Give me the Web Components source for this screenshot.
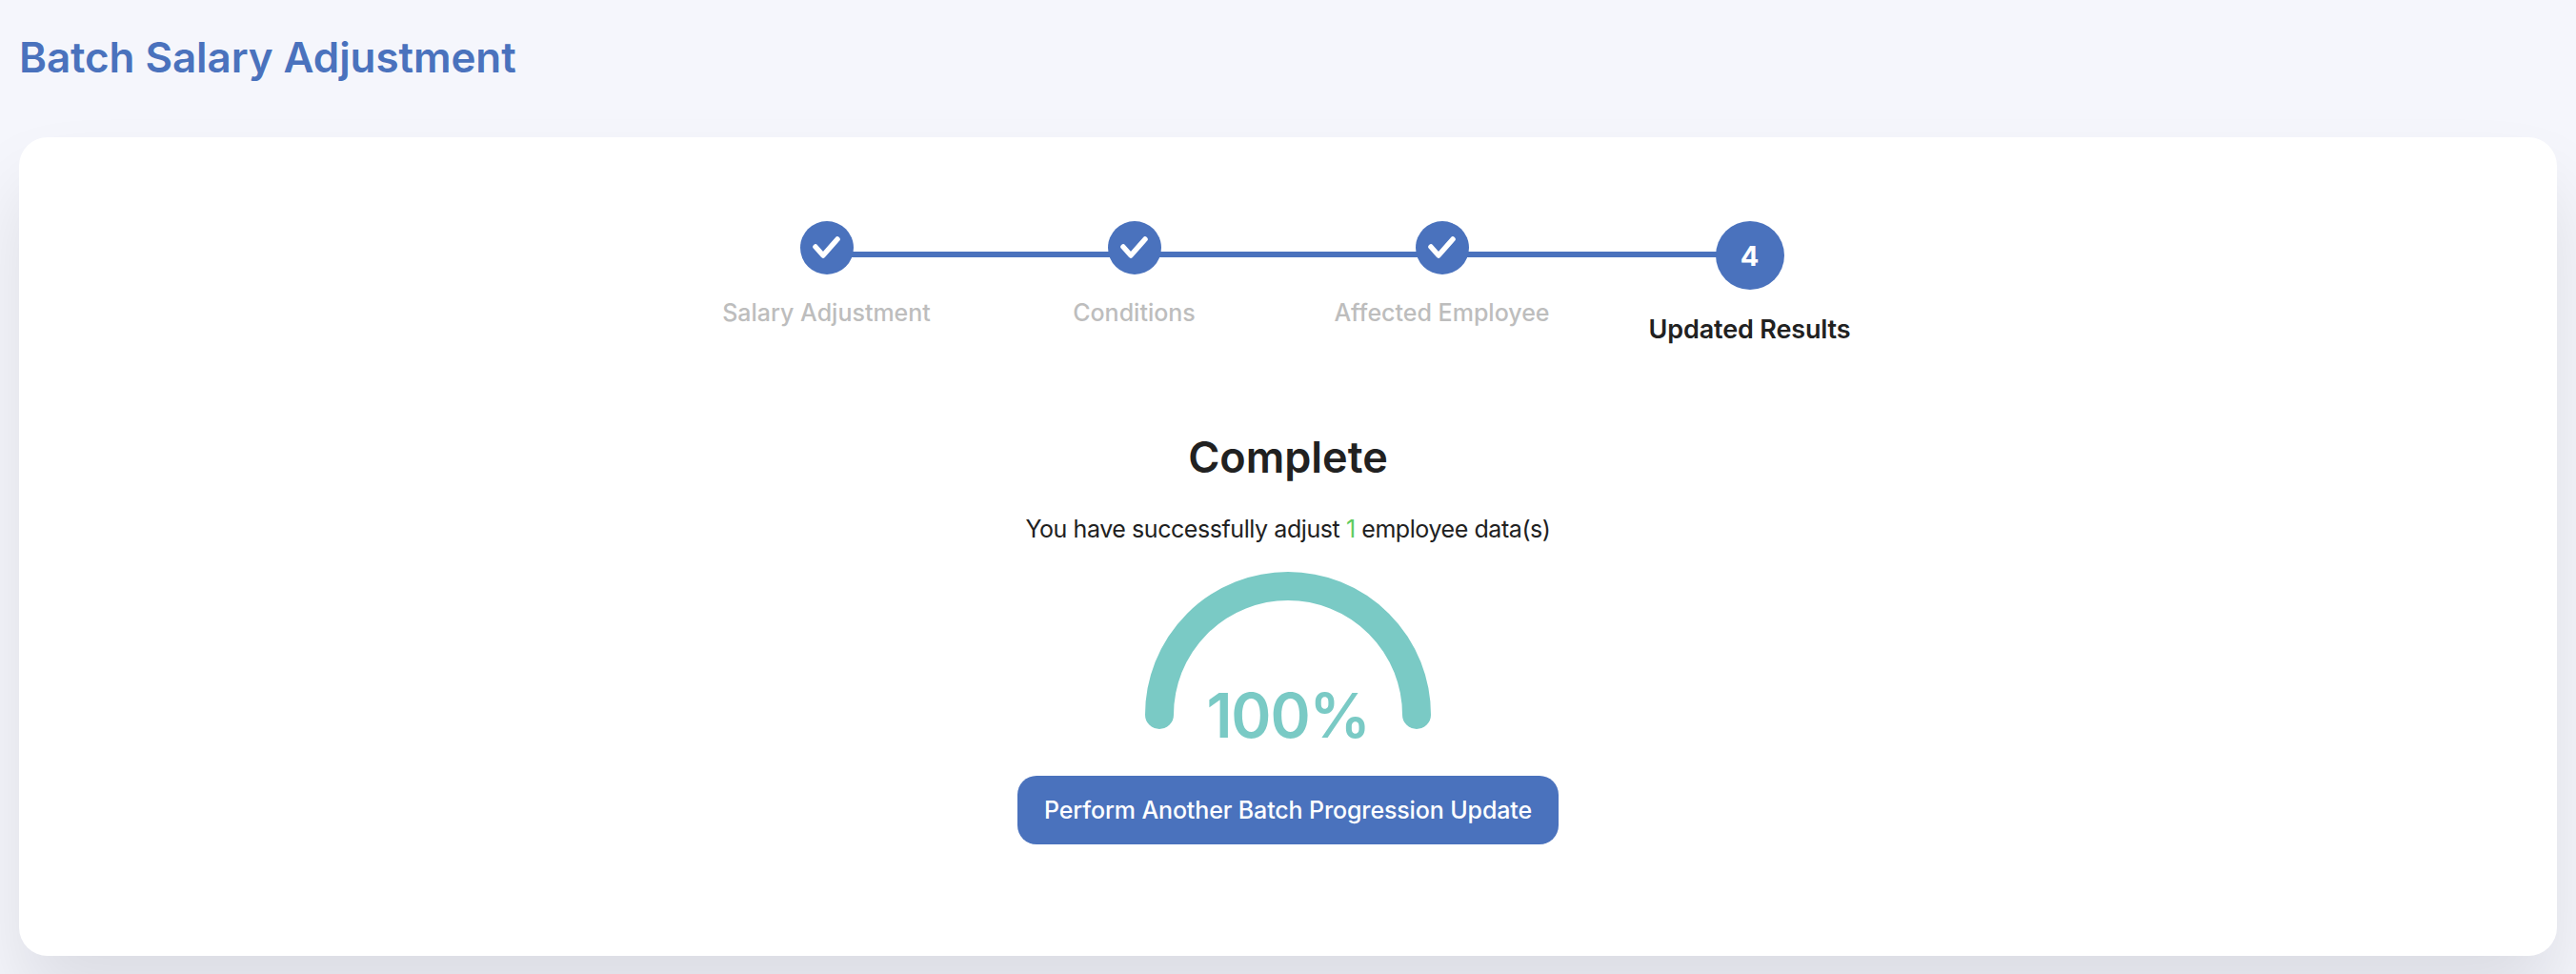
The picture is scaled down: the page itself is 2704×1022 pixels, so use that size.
<!DOCTYPE html>
<html><head><meta charset="utf-8"><style>
html,body{margin:0;padding:0;background:#f5f6fc;height:100%;overflow:hidden}
body{font-family:Inter,"Liberation Sans",sans-serif;color:#212121}
</style></head><body>
<template id="t-page"><style>
:host{display:flex;flex-direction:column;height:1022px;box-sizing:border-box;padding:0 20px 19px}
h1{margin:0;height:144px;box-sizing:border-box;padding-top:33px;font:600 44px/54px Inter,sans-serif;color:#4a72bd;letter-spacing:-.1px}
.card{flex:1;background:#fff;border-radius:30px;box-shadow:0 50px 80px rgba(0,0,20,.1);padding-top:88px;display:flex;flex-direction:column;align-items:center}
</style><h1>Batch Salary Adjustment</h1><div class="card"><slot></slot></div></template>

<template id="t-stepper"><style>
:host{display:grid;grid-template-columns:repeat(4,323px)}
</style><slot></slot></template>

<template id="t-step"><style>
:host{display:flex;flex-direction:column;align-items:center;position:relative;font:500 25px/30px Inter,sans-serif;color:#bdbdbd;letter-spacing:0}
:host([connect])::before{content:"";position:absolute;left:50%;width:100%;top:32px;height:6px;background:#4a72bd}
.dot{position:relative;width:56px;height:56px;border-radius:50%;background:#4a72bd;display:flex;align-items:center;justify-content:center;color:#fff}
:host([current]) .dot{width:72px;height:72px;font:700 29px/1 Inter,sans-serif;letter-spacing:0}
:host([current]){color:#212121;font-weight:600;font-size:27px;letter-spacing:-.15px}
.label{margin-top:25px;white-space:nowrap}
:host([current]) .label{margin-top:27px}
svg{display:block}
</style><div class="dot" id="dot"></div><div class="label"><slot></slot></div></template>

<template id="t-gauge"><style>
:host{display:block;position:relative;width:300px;height:174px}
svg{display:block}
.v{position:absolute;left:0;right:0;top:113px;text-align:center;font:600 64px/76px Inter,sans-serif;color:#7acac5;letter-spacing:-1.2px}
</style><svg width="300" height="165" viewBox="0 0 300 165"><path d="M15 150A135 135 0 0 1 285 150" fill="none" stroke="#7acac5" stroke-width="30" stroke-linecap="round"/></svg><div class="v"><slot></slot></div></template>

<template id="t-result"><style>
:host{display:flex;flex-direction:column;align-items:center;margin-top:92px}
h2{margin:0;font:600 45px/54px Inter,sans-serif;color:#212121;letter-spacing:0}
p{margin:33px 0 0;font:400 25px/30px Inter,sans-serif;color:#212121;letter-spacing:-.43px}
b{font-weight:400;color:#5ecb5e}
.g{margin-top:30px}
button{margin-top:40px;width:568px;height:72px;border:0;border-radius:20px;background:#4a72bd;color:#fff;font:500 25px/30px Inter,sans-serif;letter-spacing:-.13px;padding:0}
</style><h2>Complete</h2><p>You have successfully adjust <b>1</b> employee data(s)</p><div class="g"><gauge-meter>100%</gauge-meter></div><button>Perform Another Batch Progression Update</button></template>

<batch-page>
<salary-stepper>
<salary-step connect>Salary Adjustment</salary-step>
<salary-step connect>Conditions</salary-step>
<salary-step connect>Affected Employee</salary-step>
<salary-step current="4">Updated Results</salary-step>
</salary-stepper>
<result-panel></result-panel>
</batch-page>
<script>
function def(name,tid,after){customElements.define(name,class extends HTMLElement{constructor(){super();this.attachShadow({mode:'open'}).appendChild(document.getElementById(tid).content.cloneNode(true));}connectedCallback(){after&&after(this)}})}
def('salary-stepper','t-stepper');
def('salary-step','t-step',el=>{const d=el.shadowRoot.getElementById('dot');
 if(el.hasAttribute('current')){d.textContent=el.getAttribute('current')}
 else d.innerHTML='<svg width="56" height="56" viewBox="0 0 56 56"><path d="M16 27l8 9 15-17" fill="none" stroke="#fff" stroke-width="5.5" stroke-linecap="round" stroke-linejoin="round"/></svg>';});
def('gauge-meter','t-gauge');
def('result-panel','t-result');
def('batch-page','t-page');
</script>
</body></html>
